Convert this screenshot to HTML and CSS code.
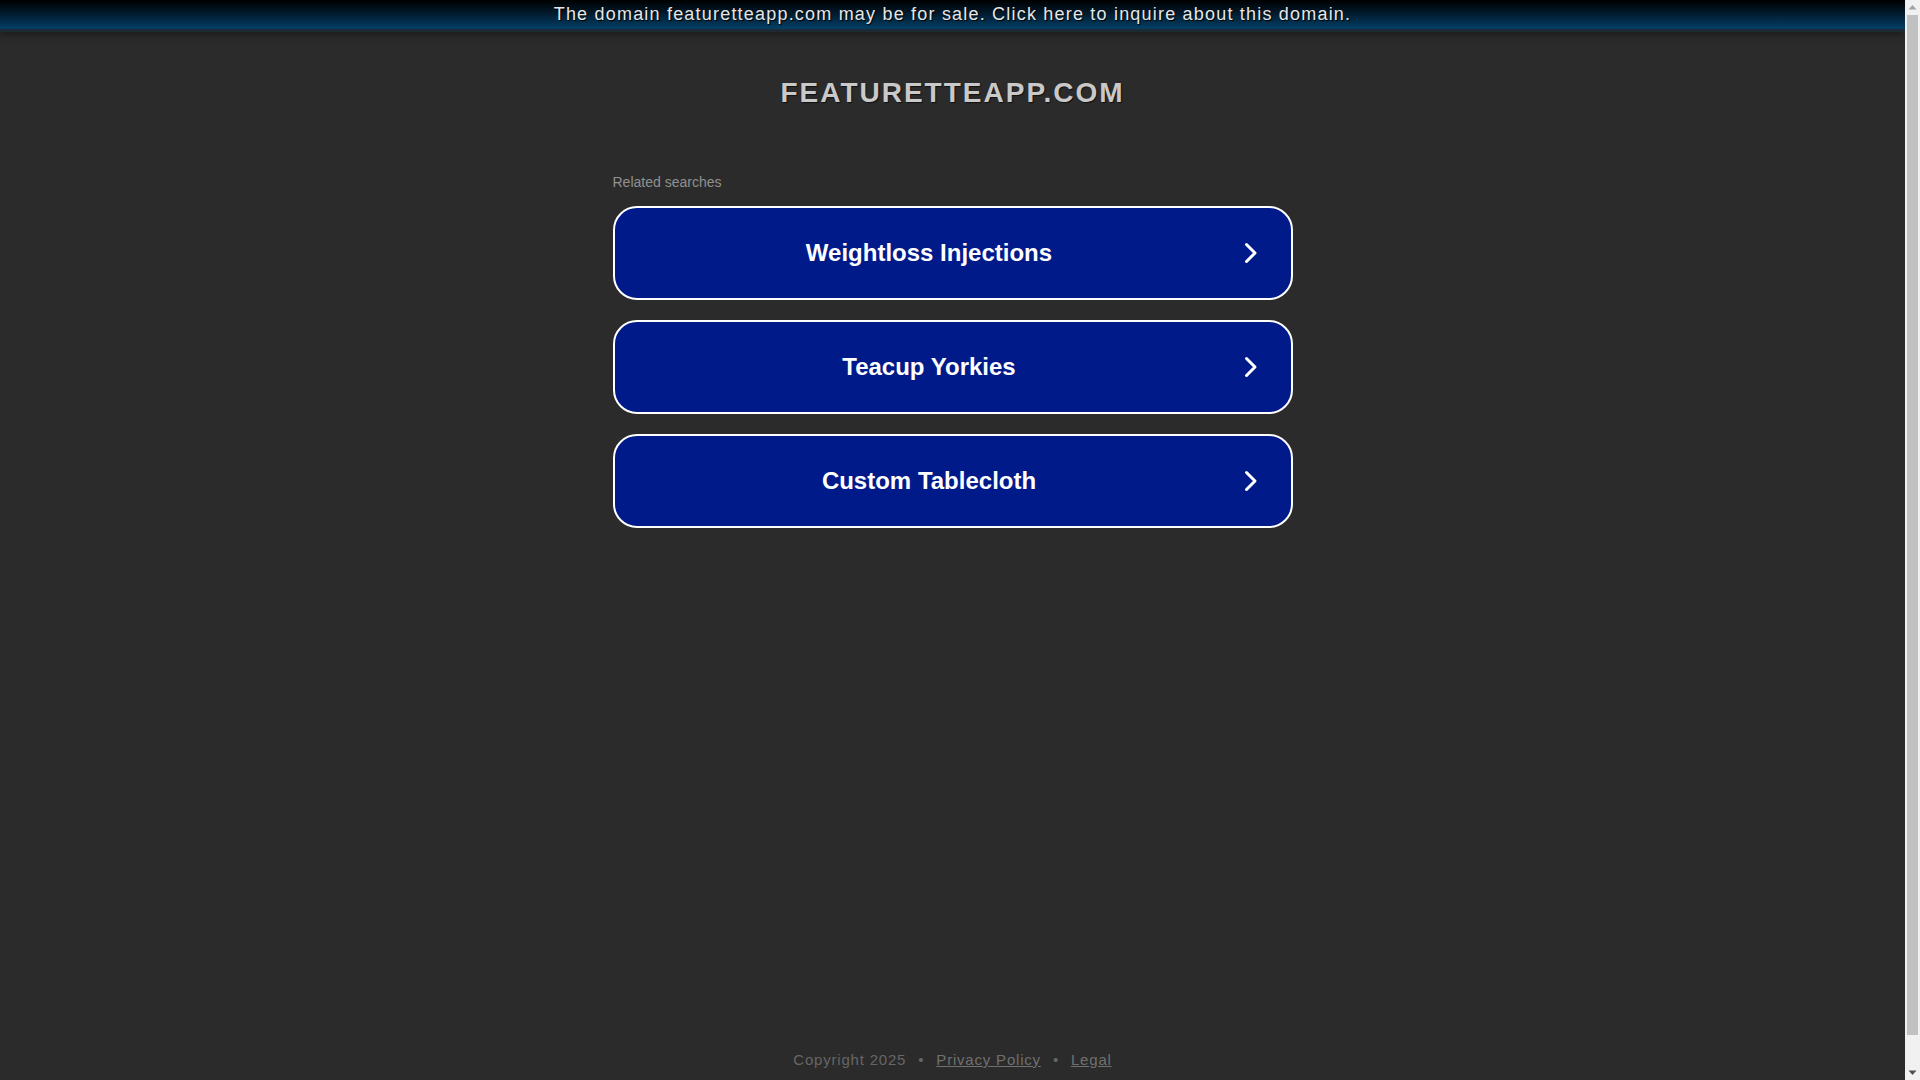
FILE: index.html
```html
<!DOCTYPE html>
<html lang="en">
<head>
<meta charset="utf-8">
<title>featuretteapp.com</title>
<link rel="stylesheet" href="styles.css">
</head>
<body>
<div class="page">
  <div class="topbar">The domain featuretteapp.com may be for sale. Click here to inquire about this domain.</div>
  <main class="content">
    <h1 class="domain">FEATURETTEAPP.COM</h1>
    <div class="related">Related searches</div>
    <div class="links">
      <a class="search" href="#"><span class="label">Weightloss Injections</span><svg class="chev" width="14" height="22" viewBox="0 0 14 22"><polyline points="2.5,2.5 11,11 2.5,19.5" fill="none" stroke="#fff" stroke-width="3" stroke-linecap="round" stroke-linejoin="round"/></svg></a>
      <a class="search" href="#"><span class="label">Teacup Yorkies</span><svg class="chev" width="14" height="22" viewBox="0 0 14 22"><polyline points="2.5,2.5 11,11 2.5,19.5" fill="none" stroke="#fff" stroke-width="3" stroke-linecap="round" stroke-linejoin="round"/></svg></a>
      <a class="search" href="#"><span class="label">Custom Tablecloth</span><svg class="chev" width="14" height="22" viewBox="0 0 14 22"><polyline points="2.5,2.5 11,11 2.5,19.5" fill="none" stroke="#fff" stroke-width="3" stroke-linecap="round" stroke-linejoin="round"/></svg></a>
    </div>
  </main>
  <footer class="footer">
    <span>Copyright 2025</span><span class="dot">•</span><a href="#">Privacy Policy</a><span class="dot">•</span><a href="#">Legal</a>
  </footer>
</div>
<div class="scrollbar" aria-hidden="true">
  <div class="sb-btn"><svg width="15" height="15" viewBox="0 0 15 15"><polygon points="3.5,9.5 11.5,9.5 7.5,5" fill="#a3a3a3"/></svg></div>
  <div class="sb-track"><div class="sb-thumb"></div></div>
  <div class="sb-btn"><svg width="15" height="15" viewBox="0 0 15 15"><polygon points="3.5,5.5 11.5,5.5 7.5,10" fill="#505050"/></svg></div>
</div>
</body>
</html>
```

FILE: styles.css
```css
html, body {
  margin: 0;
  padding: 0;
}
body {
  background: #2b2b2b;
  font-family: "Liberation Sans", Arial, sans-serif;
  padding-right: 15px;
}
.page {
  min-height: 1112px;
  display: flex;
  flex-direction: column;
}
.topbar {
  height: 29px;
  line-height: 28px;
  background: linear-gradient(to bottom, #000 0%, #011422 35%, #033f66 100%);
  border-bottom: 3px solid #1c2a33;
  box-shadow: 0 2px 8px rgba(0, 0, 0, 0.45);
  color: #e6e6e6;
  font-size: 18px;
  letter-spacing: 1.2px;
  text-align: center;
  text-shadow: 1px 1px 1px #000;
  white-space: nowrap;
  overflow: hidden;
}
.content {
  width: 680px;
  margin: 0 auto;
  display: flex;
  flex-direction: column;
}
.domain {
  margin: 45px 0 0;
  font-size: 28px;
  font-weight: 700;
  letter-spacing: 2px;
  color: #c9c9c9;
  text-align: center;
  text-shadow: 1px 1px 1px #111;
}
.related {
  margin-top: 65px;
  font-size: 14px;
  color: #919191;
}
.links {
  margin-top: 16px;
  display: flex;
  flex-direction: column;
  gap: 20px;
}
.search {
  box-sizing: border-box;
  height: 94px;
  display: flex;
  align-items: center;
  background: #011a8a;
  border: 2px solid #fff;
  border-radius: 24px;
  padding-right: 33px;
  color: #fff;
  text-decoration: none;
}
.label {
  flex: 1;
  text-align: center;
  font-size: 24px;
  font-weight: 700;
}
.chev {
  display: block;
}
.footer {
  margin-top: auto;
  padding-bottom: 44px;
  text-align: center;
  font-size: 15px;
  letter-spacing: 0.8px;
  color: #666;
}
.footer a {
  color: #707070;
}
.dot {
  margin: 0 12px;
  color: #666;
}
.scrollbar {
  position: fixed;
  top: 0;
  right: 0;
  width: 15px;
  height: 100vh;
  background: #f1f1f1;
  display: flex;
  flex-direction: column;
}
.sb-btn {
  height: 15px;
  flex: none;
}
.sb-btn svg {
  display: block;
}
.sb-track {
  flex: 1;
  padding: 0 2px 30px;
}
.sb-thumb {
  height: 100%;
  background: #c1c1c1;
}
```
